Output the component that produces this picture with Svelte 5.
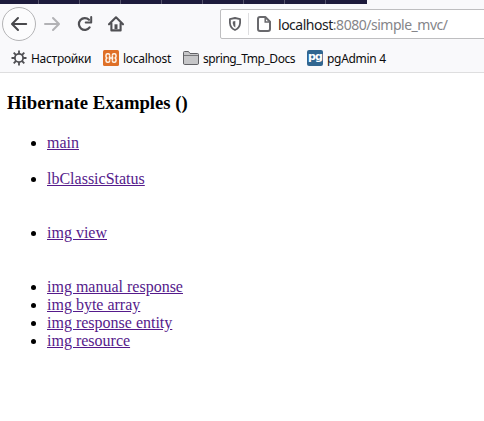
<script>
  const dividers = Array.from({ length: 8 });
  const groups = [
    { gap: 18, links: ['main'] },
    { gap: 36, links: ['lbClassicStatus'] },
    { gap: 36, links: ['img view'] },
    { gap: 0, links: ['img manual response', 'img byte array', 'img response entity', 'img resource'] }
  ];
</script>

<div class="window">
  <div class="tabs">{#each dividers as _}<i></i>{/each}</div>
  <div class="nav">
    <svg class="back" width="36" height="36" viewBox="0 0 36 36" fill="none">
      <circle cx="18" cy="18" r="16.5" fill="#fcfcfd" stroke="#b4b4b6" />
      <path d="M25.2 18H11.5M17 12L11 18L17 24" stroke="#48484c" stroke-width="2" stroke-linecap="round" stroke-linejoin="round" />
    </svg>
    <svg class="forward" width="18" height="18" viewBox="0 0 18 18" fill="none">
      <path d="M2 9H15.5M10 3L16 9L10 15" stroke="#b2b2b5" stroke-width="2" stroke-linecap="round" stroke-linejoin="round" />
    </svg>
    <svg class="reload" width="18" height="18" viewBox="0 0 18 18" fill="none">
      <path d="M13 4.8A5.9 5.9 0 1 0 13.6 12.4" stroke="#505054" stroke-width="2.2" stroke-linecap="round" />
      <path d="M15.2 2V7.5H9.7" stroke="#505054" stroke-width="2" stroke-linecap="round" stroke-linejoin="round" />
    </svg>
    <svg class="home" width="18" height="18" viewBox="0 0 18 18" fill="none">
      <path d="M2 9.3L9 2.3L16 9.3M4.4 8.5V15.4H13.6V8.5" stroke="#505054" stroke-width="2.1" stroke-linecap="round" stroke-linejoin="round" />
      <path d="M7.5 9.3H10.5V14H7.5Z" fill="#505054" />
    </svg>
    <div class="url">
      <svg class="shield" width="14" height="16" viewBox="0 0 14 16" fill="none">
        <path d="M7 2L12.1 3.2V7Q11.7 12 7 14Q2.3 12 1.9 7V3.2Z" stroke="#606064" stroke-width="1.8" stroke-linejoin="round" />
        <path d="M7.3 5V11.4Q4.8 9.9 4.8 7.2V5.4Z" fill="#606064" />
      </svg>
      <i class="sep"></i>
      <svg class="page" width="14" height="16" viewBox="0 0 14 16" fill="none">
        <path d="M3 1H8.3L13 5.7V13Q13 15 11 15H3Q1 15 1 13V3Q1 1 3 1Z" stroke="#69696d" stroke-width="2" stroke-linejoin="round" />
        <path d="M8.2 1V6H13" stroke="#69696d" stroke-width="1.5" />
      </svg>
      <span class="address">localhost<span>:8080/simple_mvc/</span></span>
    </div>
  </div>
  <div class="bookmarks">
    <div class="mark settings">
      <svg width="16" height="16" viewBox="0 0 16 16" fill="none" stroke="#505054">
        <circle cx="8" cy="8" r="4.1" stroke-width="1.8" />
        <path d="M8 .5V4M8 12V15.5M.5 8H4M12 8H15.5M2.7 2.7L5 5M11 11L13.3 13.3M2.7 13.3L5 11M11 5L13.3 2.7" stroke-width="1.8" />
      </svg><span>Настройки</span>
    </div>
    <div class="mark local">
      <svg width="16" height="16" viewBox="0 0 16 16" fill="none">
        <rect width="16" height="16" rx="1.5" fill="#df7027" />
        <path d="M6.6 5.8V5Q6.6 3.7 5.2 3.7H4.5Q3 3.7 3 5.2V6.4Q3 7.5 4 8Q3 8.5 3 9.6V10.8Q3 12.3 4.5 12.3H5.2Q6.6 12.3 6.6 11V10.2M9.4 5.8V5Q9.4 3.7 10.8 3.7H11.5Q13 3.7 13 5.2V6.4Q13 7.5 12 8Q13 8.5 13 9.6V10.8Q13 12.3 11.5 12.3H10.8Q9.4 12.3 9.4 11V10.2M5.6 8H10.4M6.6 6V10M9.4 6V10" stroke="#fff4e8" stroke-width="1.5" stroke-linejoin="round" />
      </svg><span>localhost</span>
    </div>
    <div class="mark docs">
      <svg width="16" height="14" viewBox="0 0 16 14">
        <path d="M.5 12V1.5Q.5.5 1.5.5H5.5L7 2.5H14.5Q15.5 2.5 15.5 3.5V12Q15.5 13.5 14.5 13.5H1.5Q.5 13.5.5 12Z" fill="#c6c6c8" stroke="#626266" />
        <path d="M1 4.5H15" stroke="#77777a" />
      </svg><span>spring_Tmp_Docs</span>
    </div>
    <div class="mark pg">
      <div class="badge">pg</div><span>pgAdmin 4</span>
    </div>
  </div>
  <main>
    <h3>Hibernate Examples ()</h3>
    {#each groups as group}
      <ul style:margin-bottom="{group.gap}px">
        {#each group.links as link}<li><a href="#top">{link}</a></li>{/each}
      </ul>
    {/each}
  </main>
</div>

<style>
  :global(body) { margin: 0; background: #fff; }
  .window { width: 484px; height: 421px; overflow: hidden; background: linear-gradient(#f9f9fb 72px, #fff 72px); }
  .tabs { display: flex; width: 367px; height: 4px; background: #1d1b3c; }
  .tabs i { width: 40px; border-right: 1px solid #55546c; flex: none; }
  .tabs i:first-child { width: 38px; }
  .nav { box-sizing: border-box; height: 40px; display: flex; align-items: center; padding-left: 1px; }
  svg { flex: none; display: block; }
  .forward { margin-left: 6px; }
  .reload { margin-left: 15px; }
  .home { margin-left: 13px; }
  .url { box-sizing: border-box; width: 270px; height: 30px; margin-left: 95px; flex: none; border: 1px solid #bebec0; border-radius: 2px; background: #fff; display: flex; align-items: center; padding-left: 7px; font: 14px "Noto Sans", sans-serif; color: #1b1b1f; }
  .sep { width: 1px; height: 22px; background: #dedee0; margin: 0 8px 0 6px; }
  .address { margin-left: 7px; letter-spacing: -.48px; white-space: nowrap; }
  .address span { color: #858589; }
  .bookmarks { box-sizing: border-box; height: 29px; display: flex; padding-left: 11px; border-bottom: 1px solid #dededf; font: 12px "Noto Sans", sans-serif; color: #0c0c0d; }
  .mark { display: flex; align-items: center; gap: 4px; height: 28px; white-space: nowrap; flex: none; }
  .settings { width: 92px; }
  .local { width: 80px; }
  .docs { width: 124px; }
  .mark span { letter-spacing: -.3px; }
  .docs span { letter-spacing: -.45px; }
  .badge { box-sizing: border-box; width: 16px; height: 16px; padding-top: 1px; border-radius: 2px; background: #316690; color: #fff; font: bold 11px/11px "DejaVu Sans", sans-serif; letter-spacing: -.8px; text-align: center; }
  main { padding: 20px 7px 0; font: 16px/18px "Liberation Serif", serif; color: #000; }
  h3 { margin: 0 0 21px; font-size: 18.72px; line-height: 20px; }
  ul { margin: 0; padding-left: 40px; }
  a { color: #551a8b; text-decoration: underline; }
</style>
